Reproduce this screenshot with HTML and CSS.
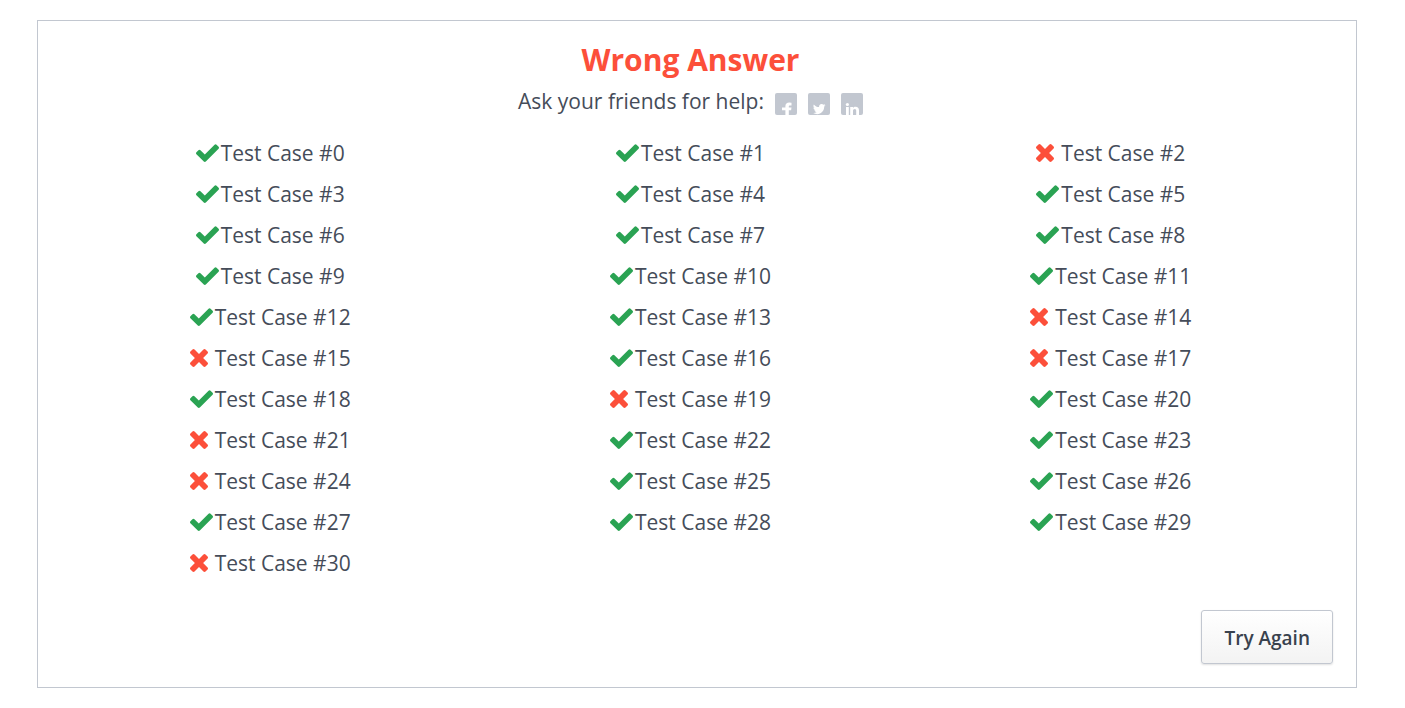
FILE: index.html
```html
<!DOCTYPE html>
<html lang="en">
<head>
<meta charset="utf-8">
<meta name="viewport" content="width=device-width, initial-scale=1">
<title>Wrong Answer</title>
<link rel="stylesheet" href="styles.css">
</head>
<body>
<svg class="sprite" aria-hidden="true">
  <symbol id="check" viewBox="121 309 1550 1213"><path d="M1671 566q0 40-28 68l-724 724-136 136q-28 28-68 28t-68-28l-136-136-362-362q-28-28-28-68t28-68l136-136q28-28 68-28t68 28l294 295 656-657q28-28 68-28t68 28l136 136q28 28 28 68z"/></symbol>
  <symbol id="cross" viewBox="302 366 1188 1188"><path d="M1490 1322q0 40-28 68l-136 136q-28 28-68 28t-68-28l-294-294-294 294q-28 28-68 28t-68-28l-136-136q-28-28-28-68t28-68l294-294-294-294q-28-28-28-68t28-68l136-136q28-28 68-28t68 28l294 294 294-294q28-28 68-28t68 28l136 136q28 28 28 68t-28 68l-294 294 294 294q28 28 28 68z"/></symbol>
</svg>
<main class="result">
  <div class="body">
    <h1 class="title">Wrong Answer</h1>
    <div class="share">
      <span>Ask your friends for help:</span>
      <a class="social" href="#" aria-label="Facebook"><svg viewBox="0 0 22 22"><path d="M16.500 9.700v2.700H15c-.9 0-1.200.4-1.200 1.100v1.100h2.700l-.4 2.600h-2.300V22h-3.400v-4.800H7v-2.600h3.400v-1.400c0-2.300 1.500-3.600 3.800-3.600z"/></svg></a>
      <a class="social" href="#" aria-label="Twitter"><svg viewBox="0 0 22 22"><path d="M17.500 12.200q-.5.800-1.300 1.300c.1 4-2.900 7.700-7 7.700-1.500 0-2.900-.4-4.100-1.100 1.300.1 2.700-.3 3.700-1.100-1.100 0-2.100-.7-2.400-1.800h1.100c-1.300-.3-2.100-1.400-2.100-2.600l1.200.3c-1.200-.8-1.500-2.300-.8-3.500 1.300 1.600 3.200 2.600 5.300 2.700-.4-1.700.9-3.200 2.500-3.200.8 0 1.400.3 1.900.8l1.700-.6-1.100 1.400z"/></svg></a>
      <a class="social" href="#" aria-label="LinkedIn"><svg viewBox="0 0 22 22"><path d="M5 14h2.800v8H5zM9.200 14H12v1.100c.5-.8 1.400-1.300 2.600-1.300 2.100 0 3.400 1.300 3.400 3.700V22h-2.800v-4.200c0-1.100-.5-1.800-1.400-1.800-1.100 0-1.800.7-1.800 1.900V22H9.200z"/><circle cx="6.400" cy="11.500" r="1.600"/></svg></a>
    </div>
    <ul class="cases" id="cases"></ul>
  </div>
  <div class="actions"><button class="retry" type="button">Try Again</button></div>
</main>
<script src="cases.js"></script>
</body>
</html>
```
FILE: styles.css
```css
* { box-sizing: border-box; }
body {
  margin: 0;
  padding: 20px 48px 20px 37px;
  background: #fff;
  color: #454c59;
  font-family: "Open Sans", "Noto Sans", sans-serif;
  font-size: 21px;
  line-height: 41px;
}
.sprite { display: none; }
.result { border: 1px solid #c2c7d0; padding: 19px 23px 23px 22px; }
.body { padding-right: 12px; }
.title {
  margin: 0 0 1px;
  color: #fc4f3a;
  font-size: 30px;
  font-weight: 700;
  line-height: 40px;
  text-align: center;
}
.share { display: flex; justify-content: center; align-items: center; gap: 11px; }
.social { display: block; width: 22px; height: 22px; margin-top: 5px; border-radius: 2px; background: #c2c7d0; }
.social svg { display: block; width: 22px; height: 22px; fill: #fff; }
.cases {
  display: grid;
  grid-template-columns: repeat(3, 1fr);
  margin: 11px 0 26px;
  padding: 0;
  list-style: none;
}
.case { display: flex; justify-content: center; align-items: center; }
.icon { width: 25px; display: flex; padding-bottom: 2px; }
.icon svg { display: block; }
.pass svg { width: 23px; height: 18px; fill: #2aa353; }
.fail svg { width: 18px; height: 18px; fill: #fc4f3a; }
.actions { display: flex; justify-content: flex-end; }
.retry {
  height: 54px;
  padding: 1px 22px 0;
  border: 1px solid #c2c7d0;
  border-radius: 3px;
  background: linear-gradient(#fff, #f3f3f3);
  box-shadow: 0 1px 2px rgba(0, 0, 0, .12);
  color: #39424e;
  font-family: inherit;
  font-size: 19px;
  font-weight: 600;
}
```
FILE: cases.js
```js
const failed = new Set([2, 14, 15, 17, 19, 21, 24, 30]);
const list = document.getElementById("cases");
for (let i = 0; i <= 30; i++) {
  const bad = failed.has(i);
  const item = document.createElement("li");
  item.className = "case " + (bad ? "fail" : "pass");
  item.innerHTML = `<span class="icon"><svg role="img" aria-label="${bad ? "Failed" : "Passed"}"><use href="#${bad ? "cross" : "check"}"/></svg></span><span>Test Case #${i}</span>`;
  list.append(item);
}
```
